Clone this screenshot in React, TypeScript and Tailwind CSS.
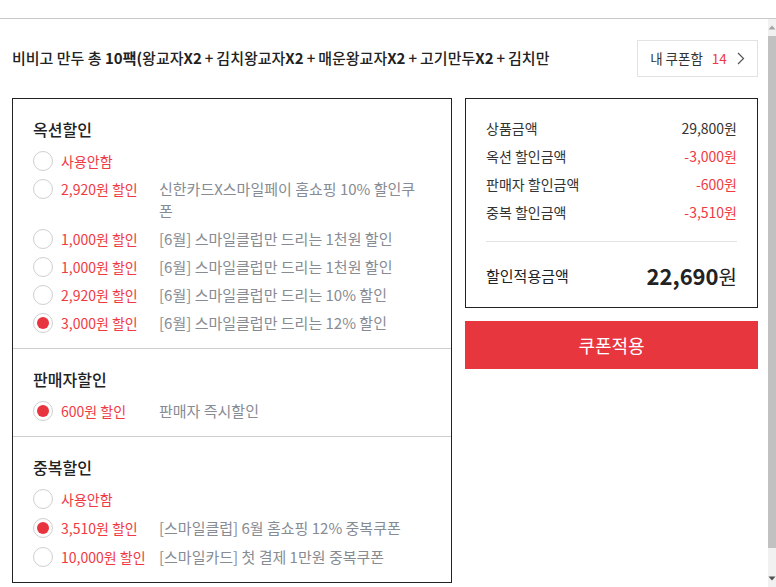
import React from "react";

const FONT = { fontFamily: '"Noto Sans CJK KR", "Noto Sans", sans-serif' };

type Item = { amount: string; desc?: string; checked?: boolean };

function Radio({ checked }: { checked?: boolean }) {
  return (
    <div className="w-[20px] h-[20px] rounded-full border border-[#cfcfcf] bg-white flex items-center justify-center shrink-0 mt-px">
      {checked && <div className="w-[12px] h-[12px] rounded-full bg-[#e8343e]" />}
    </div>
  );
}

function Row({ item }: { item: Item }) {
  return (
    <div className="flex items-start leading-[22px]">
      <Radio checked={item.checked} />
      <div className="ml-[8px] w-[98px] shrink-0 text-[14px] text-[#ef3a44] whitespace-nowrap">{item.amount}</div>
      {item.desc && <div className="w-[262px] text-[15px] text-[#878b93]">{item.desc}</div>}
    </div>
  );
}

function Section({ title, items, last }: { title: string; items: Item[]; last?: boolean }) {
  return (
    <div className={`px-[20px] pt-[19px] pb-[14px] ${last ? "" : "border-b border-[#cfcfcf]"}`}>
      <div className="h-[22px] leading-[22px] text-[16px] font-medium text-[#222] mb-[10px]">{title}</div>
      <div className={`flex flex-col ${last ? "gap-[7px]" : "gap-[6px]"}`}>
        {items.map((it, i) => (
          <Row key={i} item={it} />
        ))}
      </div>
    </div>
  );
}

function P() {
  return <span className="px-[3px]">+</span>;
}

export default function App() {
  const s1: Item[] = [
    { amount: "사용안함" },
    { amount: "2,920원 할인", desc: "신한카드X스마일페이 홈쇼핑 10% 할인쿠폰" },
    { amount: "1,000원 할인", desc: "[6월] 스마일클럽만 드리는 1천원 할인" },
    { amount: "1,000원 할인", desc: "[6월] 스마일클럽만 드리는 1천원 할인" },
    { amount: "2,920원 할인", desc: "[6월] 스마일클럽만 드리는 10% 할인" },
    { amount: "3,000원 할인", desc: "[6월] 스마일클럽만 드리는 12% 할인", checked: true },
  ];
  const s2: Item[] = [{ amount: "600원 할인", desc: "판매자 즉시할인", checked: true }];
  const s3: Item[] = [
    { amount: "사용안함" },
    { amount: "3,510원 할인", desc: "[스마일클럽] 6월 홈쇼핑 12% 중복쿠폰", checked: true },
    { amount: "10,000원 할인", desc: "[스마일카드] 첫 결제 1만원 중복쿠폰" },
  ];
  const summary = [
    { label: "상품금액", value: "29,800원", red: false },
    { label: "옥션 할인금액", value: "-3,000원", red: true },
    { label: "판매자 할인금액", value: "-600원", red: true },
    { label: "중복 할인금액", value: "-3,510원", red: true },
  ];

  return (
    <div className="w-[776px] h-[587px] overflow-hidden bg-white flex flex-col" style={FONT}>
      <div className="h-[18px] shrink-0" />
      <div className="flex flex-1 min-h-0 border-t border-[#c8c8c8]">
        <div className="flex-1 pl-[12px] pr-[10px]">
          {/* Title row */}
          <div className="mt-[21px] h-[37px] flex items-center justify-between">
            <div className="text-[15px] font-medium text-[#222] whitespace-nowrap overflow-hidden w-[580px]">
              비비고 만두 총 <b>10팩(</b>왕교자<b>X2</b><P />김치왕교자<b>X2</b><P />매운왕교자<b>X2</b><P />고기만두<b>X2</b><P />김치만
            </div>
            <div className="h-[37px] w-[121px] border border-[#e2e2e2] flex items-center justify-center text-[13.5px]">
              <span className="text-[#333]">내 쿠폰함</span>
              <span className="text-[#ef3a44] ml-[9px]">14</span>
              <svg className="ml-[10px]" width="8" height="13" viewBox="0 0 8 13" fill="none">
                <path d="M1 1l5.5 5.5L1 12" stroke="#555" strokeWidth="1.2" />
              </svg>
            </div>
          </div>

          {/* Panels */}
          <div className="mt-[21px] flex items-start gap-[13px]">
            <div className="w-[440px] border border-[#222]">
              <Section title="옥션할인" items={s1} />
              <Section title="판매자할인" items={s2} />
              <Section title="중복할인" items={s3} last />
            </div>

            <div className="flex-1 flex flex-col">
              <div className="border border-[#222] px-[20px] pt-[18px] pb-[16px]">
                <div className="flex flex-col gap-[6px]">
                  {summary.map((r, i) => (
                    <div key={i} className="flex justify-between text-[14px] leading-[22px]">
                      <span className="text-[#333]">{r.label}</span>
                      <span className={r.red ? "text-[#ef3a44]" : "text-[#333]"}>{r.value}</span>
                    </div>
                  ))}
                </div>
                <div className="mt-[18px] border-t border-[#e3e3e3]" />
                <div className="mt-[19px] h-[30px] flex items-center justify-between">
                  <span className="text-[15px] text-[#222]">할인적용금액</span>
                  <span className="flex items-baseline text-[#222]">
                    <span className="text-[22px] font-bold leading-[30px]">22,690</span>
                    <span className="text-[20px] leading-[30px]">원</span>
                  </span>
                </div>
              </div>
              <button className="mt-[13px] h-[48px] w-full bg-[#e8363f] text-white text-[18px]">쿠폰적용</button>
            </div>
          </div>
        </div>

        {/* Scrollbar */}
        <div className="w-[8px] shrink-0 bg-[#f1f1f1] flex flex-col">
          <div className="h-[17px] flex items-center justify-center">
            <svg width="8" height="5" viewBox="0 0 8 5"><path d="M4 0.5L7.5 4.5H0.5z" fill="#a3a3a3" /></svg>
          </div>
          <div className="h-[512px] bg-[#c1c1c1]" />
          <div className="flex-1" />
          <div className="h-[17px] flex items-center justify-center">
            <svg width="8" height="5" viewBox="0 0 8 5"><path d="M4 4.5L7.5 0.5H0.5z" fill="#505050" /></svg>
          </div>
        </div>
      </div>
    </div>
  );
}
